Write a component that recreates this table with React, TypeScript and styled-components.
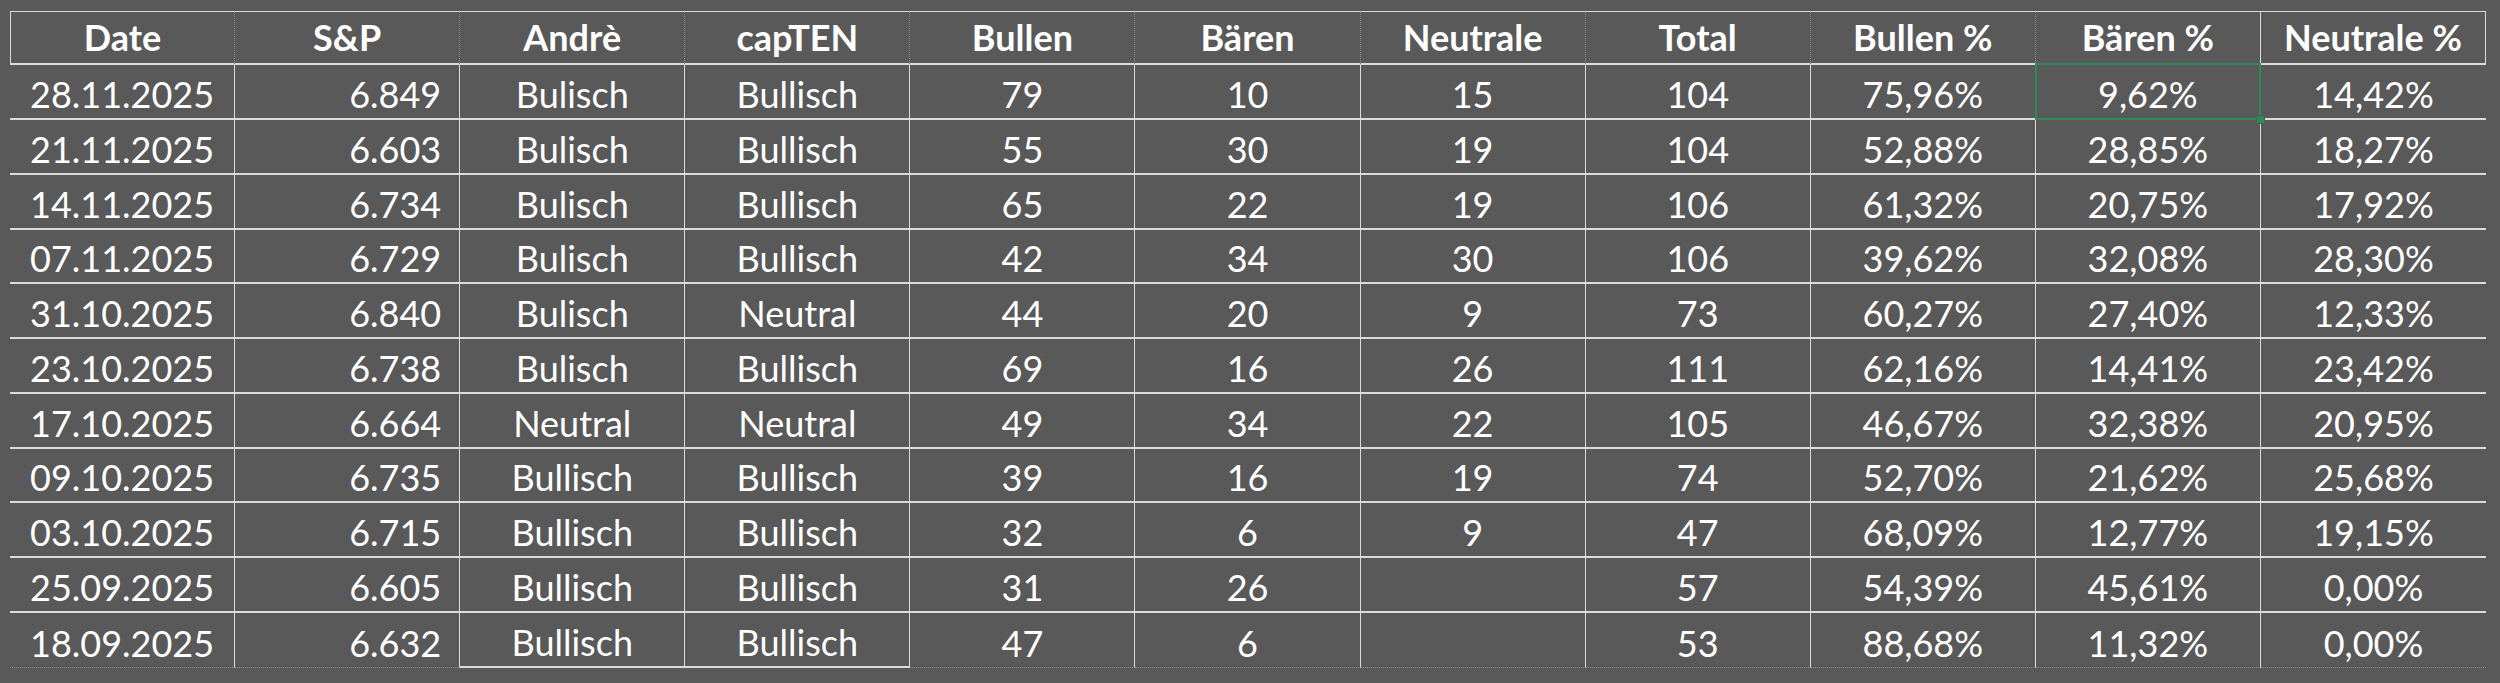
import React from "react";
import styled, { createGlobalStyle, css } from "styled-components";

const GlobalStyle = createGlobalStyle`
  html, body {
    margin: 0;
    padding: 0;
    background: #595959;
  }
  body {
    font-family: Lato, "Open Sans", "Liberation Sans", sans-serif;
    color: #ffffff;
  }
`;

const LINE = "#dcdcdc";
const GRID = "#8e8e8e";
const SELECT = "#2f8a57";

const Page = styled.div`
  width: 2500px;
  height: 683px;
  box-sizing: border-box;
  padding: 10.7px 0 0 10px;
  background: #595959;
  overflow: hidden;
`;

const Sheet = styled.div`
  display: grid;
  grid-template-columns: repeat(11, 225.1px);
  grid-auto-rows: 54.75px;
`;

type Align = "center" | "right";

const baseCell = css`
  box-sizing: border-box;
  display: flex;
  align-items: flex-end;
  font-size: 36px;
  line-height: 1.2;
  white-space: nowrap;
  color: #ffffff;
`;

const HeaderCell = styled.div<{ $first?: boolean; $last?: boolean; $solidRight?: boolean }>`
  ${baseCell};
  justify-content: center;
  font-weight: 700;
  padding-bottom: 4px;
  border-top: 1px solid ${LINE};
  border-bottom: 2px solid ${LINE};
  border-left: ${(p) => (p.$first ? `1px solid ${LINE}` : "none")};
  border-right: ${(p) =>
    p.$last || p.$solidRight ? `1px solid ${LINE}` : `1px dotted ${GRID}`};
`;

const DataCell = styled.div<{ $align: Align; $last?: boolean; $bottom: "solid" | "dotted" }>`
  ${baseCell};
  position: relative;
  justify-content: ${(p) => (p.$align === "right" ? "flex-end" : "center")};
  padding-right: ${(p) => (p.$align === "right" ? "18px" : "0")};
  padding-bottom: 2px;
  border-right: ${(p) => (p.$last ? "none" : `1px solid ${LINE}`)};
  border-bottom: ${(p) =>
    p.$bottom === "solid" ? `2px solid ${LINE}` : `1px dotted ${GRID}`};
`;

const Selection = styled.div`
  position: absolute;
  z-index: 2;
  top: -2px;
  left: -1px;
  right: -1px;
  bottom: -2px;
  border: 2px solid ${SELECT};
  box-sizing: border-box;
  pointer-events: none;
`;

const Handle = styled.div`
  position: absolute;
  right: -5px;
  bottom: -5px;
  width: 7px;
  height: 7px;
  background: ${SELECT};
  box-shadow: 0 0 0 1px #595959;
`;

const headers = [
  "Date",
  "S&P",
  "Andrè",
  "capTEN",
  "Bullen",
  "Bären",
  "Neutrale",
  "Total",
  "Bullen %",
  "Bären %",
  "Neutrale %",
];

const rows: string[][] = [
  ["28.11.2025", "6.849", "Bulisch", "Bullisch", "79", "10", "15", "104", "75,96%", "9,62%", "14,42%"],
  ["21.11.2025", "6.603", "Bulisch", "Bullisch", "55", "30", "19", "104", "52,88%", "28,85%", "18,27%"],
  ["14.11.2025", "6.734", "Bulisch", "Bullisch", "65", "22", "19", "106", "61,32%", "20,75%", "17,92%"],
  ["07.11.2025", "6.729", "Bulisch", "Bullisch", "42", "34", "30", "106", "39,62%", "32,08%", "28,30%"],
  ["31.10.2025", "6.840", "Bulisch", "Neutral", "44", "20", "9", "73", "60,27%", "27,40%", "12,33%"],
  ["23.10.2025", "6.738", "Bulisch", "Bullisch", "69", "16", "26", "111", "62,16%", "14,41%", "23,42%"],
  ["17.10.2025", "6.664", "Neutral", "Neutral", "49", "34", "22", "105", "46,67%", "32,38%", "20,95%"],
  ["09.10.2025", "6.735", "Bullisch", "Bullisch", "39", "16", "19", "74", "52,70%", "21,62%", "25,68%"],
  ["03.10.2025", "6.715", "Bullisch", "Bullisch", "32", "6", "9", "47", "68,09%", "12,77%", "19,15%"],
  ["25.09.2025", "6.605", "Bullisch", "Bullisch", "31", "26", "", "57", "54,39%", "45,61%", "0,00%"],
  ["18.09.2025", "6.632", "Bullisch", "Bullisch", "47", "6", "", "53", "88,68%", "11,32%", "0,00%"],
];

export default function App() {
  return (
    <>
      <GlobalStyle />
      <Page>
        <Sheet>
          {headers.map((h, i) => (
            <HeaderCell
              key={h}
              $first={i === 0}
              $last={i === headers.length - 1}
              $solidRight={i === 9}
            >
              {h}
            </HeaderCell>
          ))}
          {rows.map((row, r) =>
            row.map((v, c) => {
              const lastRow = r === rows.length - 1;
              const bottom = lastRow && c !== 2 && c !== 3 ? "dotted" : "solid";
              const selected = r === 0 && c === 9;
              return (
                <DataCell
                  key={`${r}-${c}`}
                  $align={c === 1 ? "right" : "center"}
                  $last={c === row.length - 1}
                  $bottom={bottom}
                >
                  {v}
                  {selected && (
                    <Selection>
                      <Handle />
                    </Selection>
                  )}
                </DataCell>
              );
            })
          )}
        </Sheet>
      </Page>
    </>
  );
}
